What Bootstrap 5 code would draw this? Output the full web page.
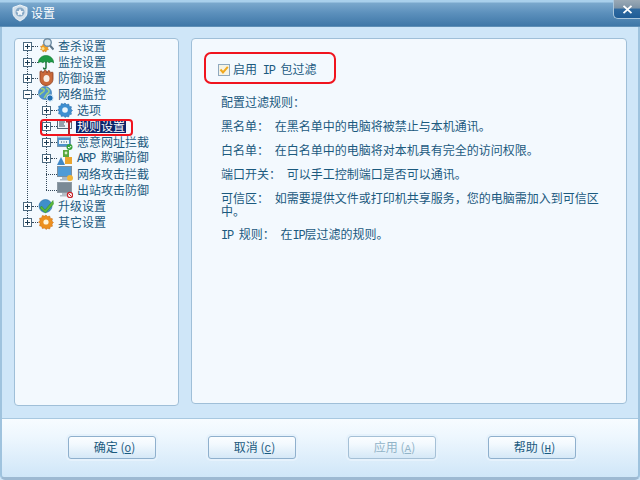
<!DOCTYPE html>
<html lang="zh-CN">
<head>
  <meta charset="UTF-8" />
  <title>设置</title>
  <link href="https://cdn.jsdelivr.net/npm/bootstrap@5.3.3/dist/css/bootstrap.min.css" rel="stylesheet" />
  <style>
    html, body { margin: 0; padding: 0; width: 640px; height: 480px; overflow: hidden; }
    body { font-family: "Noto Sans CJK SC", "Liberation Sans", sans-serif; font-size: 12px; line-height: 16px; color: #1b5a7e; background: #cfe6f8; }
    .asc { font-family: "Liberation Mono", monospace; font-size: 12px; letter-spacing: -1.2px; }

    .win-frame { width: 640px; height: 480px; position: relative; background: #cfe6f8; border-left: 2px solid #9fc3de; border-right: 2px solid #9fc3de; border-bottom: 3px solid #9db9d2; border-radius: 0 0 5px 5px; }
    .win-title { height: 27px; margin: 0 -2px; padding-left: 12px; gap: 3px; color: #fff; font-size: 12px; background: linear-gradient(#a9d0ec 0, #a9d0ec 2px, #7aa8cd 3px, #5c90bc 13px, #3f77a7 26px); border-bottom: 1px solid #5f8fb6; }
    .win-close { position: absolute; top: 0; right: -2px; width: 27px; height: 19px; background: linear-gradient(#9aa9b5 0, #7d93a6 45%, #2f6aa0 50%, #1f5c96 100%); border-left: 1px solid #a9c6dc; border-bottom: 1px solid #a9c6dc; border-radius: 0 0 0 5px; }

    .win-main { padding: 11px 12px 0; gap: 12px; height: 392px; border-bottom: 1px solid #a8c8e0; }
    .pane-tree { width: 165px; height: 368px; flex: none; background: #f3f9fe; border: 1px solid #9fbfd8; border-radius: 4px; }
    .pane-info { width: 436px; height: 366px; flex: none; padding: 13px 12px 0 29px; position: relative; word-spacing: 3px; background: #f3f9fe; border: 1px solid #9fbfd8; border-radius: 4px; }

    .tree-list { list-style: none; margin: -1px 0 0; padding: 0; position: relative; }
    .tree-row { height: 16px; position: relative; white-space: nowrap; word-spacing: 3px; }
    .lvl-one { padding-left: 8px; }
    .lvl-two { padding-left: 27px; }
    .tree-box { width: 9px; height: 9px; flex: none; position: relative; background: #fff; border: 1px solid #4c6a80; z-index: 1; }
    .tree-box::before { content: ""; position: absolute; left: 1px; top: 3px; width: 5px; height: 1px; background: #1d3d55; }
    .tree-box.is-closed::after { content: ""; position: absolute; left: 3px; top: 1px; width: 1px; height: 5px; background: #1d3d55; }
    .tree-dots { width: 6px; flex: none; border-top: 1px dotted #33485a; }
    .tree-dots-long { width: 11px; margin-left: 4px; }
    .tree-ico { width: 16px; height: 16px; flex: none; display: block; margin-right: 4px; }
    .tree-text { font-size: 12px; line-height: 14px; }
    .tree-picked { margin-left: -1px; padding: 0 1px; background: #0a246a; color: #fff; }
    .vline-one { position: absolute; left: 12px; top: 8px; height: 176px; border-left: 1px dotted #33485a; }
    .vline-two { position: absolute; left: 31px; top: 61px; height: 91px; border-left: 1px dotted #33485a; }
    .mark-row { position: absolute; left: 25px; top: 81px; width: 93px; height: 17px; border: 2px solid #f0141e; border-radius: 4px; pointer-events: none; z-index: 2; }

    .mark-check { position: absolute; left: 12px; top: 13px; width: 132px; height: 32px; border: 2px solid #f0141e; border-radius: 7px; }
    .check-line { height: 17px; margin-left: -3px; margin-top: 9px; margin-bottom: 14px; gap: 3px; }
    .check-face { width: 12px; height: 12px; flex: none; display: block; }
    .info-text p { margin: 0 0 8px; line-height: 13px; padding-top: 3px; }
    .info-text p.wrap-two { margin-bottom: 7px; }

    .win-foot { height: 58px; padding: 17px 0 0 66px; gap: 52px; background: linear-gradient(#f7fcff, #eef7fe 30%, #cfe6f8); border-radius: 0 0 5px 5px; }
    .foot-btn { width: 88px; height: 23px; padding: 0 0 0 5px; font-size: 12px; line-height: 20px; color: #1b5a7e; background: linear-gradient(#fbfdff, #f2f9fe 35%, #d5e8f7); border: 1px solid #8fb0cd; border-radius: 3px; box-shadow: 0 0 0 2px #e6f2fc; --bs-btn-disabled-opacity: 1; }
    .foot-btn:disabled { color: #92b4c8; background: linear-gradient(#fbfdff, #f2f9fe 35%, #d5e8f7); border-color: #a5c0d6; }
    .foot-btn u { font-family: "Liberation Mono", monospace; font-size: 11px; }
  </style>
</head>
<body>
  <div class="win-frame">
    <div class="win-title d-flex align-items-center">
      <svg width="16" height="18" viewBox="0 0 16 18"><path d="M8 1 L15 3.500 V8.500 C15 12.500 12 15 8 17 C4 15 1 12.500 1 8.500 V3.500 Z" fill="#d3e0eb" stroke="#eef4f9"/><circle cx="8" cy="8" r="4.500" fill="#86a8c6"/><path d="M8 4.500 l1.200 2.400 2.600.3-1.900 1.800.5 2.600L8 10.400l-2.400 1.200.5-2.600-1.900-1.800 2.600-.3z" fill="#eef4f9"/></svg>
      <span>设置</span>
    </div>
    <div class="win-close d-flex align-items-center justify-content-center">
      <svg width="11" height="9" viewBox="0 0 11 9"><path d="M1.500 .8 L9.500 8.200 M9.500 .8 L1.500 8.200" stroke="#fff" stroke-width="1.800"/></svg>
    </div>

    <div class="win-main d-flex align-items-start">
      <div class="pane-tree">
        <ul class="tree-list">
          <li class="vline-one"></li>
          <li class="vline-two"></li>
          <li class="mark-row"></li>

          <li class="tree-row lvl-one d-flex align-items-center"><span class="tree-box is-closed"></span><span class="tree-dots"></span>
            <svg class="tree-ico" viewBox="0 0 16 16"><path d="M5 6 l1.500 1 1.500-1 .5 2 2 .3-1 1.700 1 1.700-2 .3-.5 2-1.500-1-1.500 1-.5-2-2-.3 1-1.700-1-1.700 2-.3z" fill="#ef9e22" stroke="#c9771a" stroke-width=".5"/><circle cx="5" cy="10.500" r="1.500" fill="#fbe08a"/><circle cx="9.500" cy="4.500" r="3.800" fill="#d7e6ef" stroke="#6f8ea6" stroke-width="1.400"/><path d="M12 7.500 L15.500 11.500" stroke="#5c7487" stroke-width="2"/></svg>
            <span class="tree-text">查杀设置</span></li>
          <li class="tree-row lvl-one d-flex align-items-center"><span class="tree-box is-closed"></span><span class="tree-dots"></span>
            <svg class="tree-ico" viewBox="0 0 16 16"><path d="M0 9 C1 3 5 1.500 8 1.500 C11 1.500 15 3 16 9 C14 7.500 12.500 7.500 11 9 C10 7.500 9 7.500 8 8.500 C7 7.500 6 7.500 5 9 C3.500 7.500 2 7.500 0 9 Z" fill="#1f9a45" stroke="#0f7030" stroke-width=".5"/><path d="M8 8 V13.500 C8 15.500 5.500 15.500 5.500 13.500" fill="none" stroke="#0f6a2e" stroke-width="1.400"/></svg>
            <span class="tree-text">监控设置</span></li>
          <li class="tree-row lvl-one d-flex align-items-center"><span class="tree-box is-closed"></span><span class="tree-dots"></span>
            <svg class="tree-ico" viewBox="0 0 16 16"><path d="M2 2 C2 .5 4 .5 4.500 2 L5 3 L6 1 C6.500 0 8 0 8.500 1 L9 3 L10 1 C10.500 0 12 .5 12 2 L12.500 3 L14 2 C15 2 15 3 15 4 V9 C15 13 11.500 15.500 8 15.500 C4.500 15.500 2 13 2 9 Z" fill="#c9693a" stroke="#8a3d1e" stroke-width=".8"/><ellipse cx="8.500" cy="8.500" rx="3" ry="3.500" fill="#f7efe6"/></svg>
            <span class="tree-text">防御设置</span></li>
          <li class="tree-row lvl-one d-flex align-items-center"><span class="tree-box"></span><span class="tree-dots"></span>
            <svg class="tree-ico" viewBox="0 0 16 16"><circle cx="7" cy="7" r="6.500" fill="#4f94cf" stroke="#2f6ea8" stroke-width=".6"/><path d="M3 3 C5 2 7 3 6 5 C5 7 2 7 2 9 M8 2 C11 3 12 6 10 7 C8 8 8 10 6 12" fill="none" stroke="#9fd27a" stroke-width="1.600"/><circle cx="12" cy="12" r="3.200" fill="#1e6fb5" stroke="#e2f0fa"/></svg>
            <span class="tree-text">网络监控</span></li>

          <li class="tree-row lvl-two d-flex align-items-center"><span class="tree-box is-closed"></span><span class="tree-dots"></span>
            <svg class="tree-ico" viewBox="0 0 16 16"><path d="M8 1 l1.500 1.600 2.200-.6.6 2.200 2.200.6-.6 2.200L15.500 8.500 14 10l.5 2.200-2.200.6-.6 2.200-2.200-.6L8 15.500 6.500 14l-2.200.6-.6-2.200-2.200-.6.6-2.200L.5 8l1.600-1.500-.6-2.200 2.200-.6.6-2.200 2.200.6z" fill="#3f8fd0" stroke="#2a6aa6" stroke-width=".5"/><circle cx="8" cy="8" r="2.800" fill="#eaf5fc"/></svg>
            <span class="tree-text">选项</span></li>
          <li class="tree-row lvl-two d-flex align-items-center"><span class="tree-box is-closed"></span><span class="tree-dots"></span>
            <svg class="tree-ico" viewBox="0 0 16 16"><rect x=".5" y="1.500" width="14" height="9" fill="#eef3f7" stroke="#53677a"/><path d="M2 4 H8 M2 6 H7 M2 8 H8" stroke="#3b4f60"/><path d="M9 3.500 H15 M12 3.500 V16" stroke="#b3202a" stroke-width="2"/></svg>
            <span class="tree-text tree-picked">规则设置</span></li>
          <li class="tree-row lvl-two d-flex align-items-center"><span class="tree-box is-closed"></span><span class="tree-dots"></span>
            <svg class="tree-ico" viewBox="0 0 16 16"><rect x=".5" y=".5" width="13" height="12" fill="#4f93cb" stroke="#6c8aa3" stroke-width=".8"/><rect x=".5" y=".5" width="13" height="3" fill="#c9d9e4"/><rect x="2" y="6" width="10" height="4" fill="#eef6fb"/><path d="M4 8 h1 M6.500 8 h1 M9 8 h1" stroke="#1d3d55"/><circle cx="12.500" cy="13" r="3" fill="#35a33a"/><path d="M11 13 l1.200 1.200 2-2.200" fill="none" stroke="#fff"/></svg>
            <span class="tree-text">恶意网址拦截</span></li>
          <li class="tree-row lvl-two d-flex align-items-center"><span class="tree-box is-closed"></span><span class="tree-dots"></span>
            <svg class="tree-ico" viewBox="0 0 16 16"><rect x="6" y="0" width="6" height="7" fill="#58a83e"/><path d="M4 7 L8 15 H0 Z" fill="#3f88c8"/><rect x="8" y="7" width="7" height="7" fill="#eaa52f"/><circle cx="9" cy="3" r="1.400" fill="#d6eec8"/></svg>
            <span class="tree-text"><span class="asc">ARP</span> 欺骗防御</span></li>
          <li class="tree-row lvl-two d-flex align-items-center"><span class="tree-dots tree-dots-long"></span>
            <svg class="tree-ico" viewBox="0 0 16 16"><rect x=".5" y=".5" width="14" height="10" fill="#4f9bd6" stroke="#7c8f9e"/><path d="M5 11 h5 v2 h-5z M3 13 h9 v1.500 h-9z" fill="#a9b8c4"/><circle cx="13" cy="12" r="3" fill="#f0b53a"/></svg>
            <span class="tree-text">网络攻击拦截</span></li>
          <li class="tree-row lvl-two d-flex align-items-center"><span class="tree-dots tree-dots-long"></span>
            <svg class="tree-ico" viewBox="0 0 16 16"><rect x=".5" y=".5" width="14" height="10" fill="#7a8a96" stroke="#8e9aa4"/><path d="M5 11 h5 v2 h-5z M3 13 h9 v1.500 h-9z" fill="#b5bfc7"/><circle cx="13" cy="13" r="2.600" fill="#fff" stroke="#c8252c" stroke-width="1.200"/><path d="M11.500 11.500 L14.500 14.500" stroke="#c8252c"/></svg>
            <span class="tree-text">出站攻击防御</span></li>

          <li class="tree-row lvl-one d-flex align-items-center"><span class="tree-box is-closed"></span><span class="tree-dots"></span>
            <svg class="tree-ico" viewBox="0 0 16 16"><circle cx="7.500" cy="8" r="6.500" fill="#3f8fcb" stroke="#27699f" stroke-width=".6"/><path d="M3.500 8 L7 12 L15 2.500 L15.500 6 L7.500 15 L2 10 Z" fill="#5cb83c" stroke="#2f8a24" stroke-width=".5"/></svg>
            <span class="tree-text">升级设置</span></li>
          <li class="tree-row lvl-one d-flex align-items-center"><span class="tree-box is-closed"></span><span class="tree-dots"></span>
            <svg class="tree-ico" viewBox="0 0 16 16"><path d="M8 1 l1.500 1.600 2.200-.6.6 2.200 2.200.6-.6 2.200L15.500 8.500 14 10l.5 2.200-2.200.6-.6 2.200-2.200-.6L8 15.500 6.500 14l-2.200.6-.6-2.200-2.200-.6.6-2.200L.5 8l1.600-1.500-.6-2.200 2.200-.6.6-2.200 2.200.6z" fill="#ec8f1e" stroke="#c76a14" stroke-width=".5"/><circle cx="8" cy="8" r="2.600" fill="#fff4d8"/></svg>
            <span class="tree-text">其它设置</span></li>
        </ul>
      </div>

      <div class="pane-info">
        <div class="mark-check"></div>
        <label class="check-line d-flex align-items-center">
          <svg class="check-face" viewBox="0 0 12 12"><rect x=".5" y=".5" width="11" height="11" fill="#f6f3e4" stroke="#8fa9bf"/><path d="M2.500 5.500 L5 8.500 L9.800 2.800" fill="none" stroke="#f0a81e" stroke-width="2"/></svg>
          <span>启用 <span class="asc">IP</span> 包过滤</span>
        </label>
        <div class="info-text">
          <p>配置过滤规则：</p>
          <p>黑名单： 在黑名单中的电脑将被禁止与本机通讯。</p>
          <p>白名单： 在白名单中的电脑将对本机具有完全的访问权限。</p>
          <p>端口开关： 可以手工控制端口是否可以通讯。</p>
          <p class="wrap-two">可信区： 如需要提供文件或打印机共享服务，您的电脑需加入到可信区<br>中。</p>
          <p><span class="asc">IP</span> 规则： 在<span class="asc">IP</span>层过滤的规则。</p>
        </div>
      </div>
    </div>

    <div class="win-foot d-flex align-items-start">
      <button type="button" class="btn foot-btn">确定 (<u>O</u>)</button>
      <button type="button" class="btn foot-btn">取消 (<u>C</u>)</button>
      <button type="button" class="btn foot-btn" disabled>应用 (<u>A</u>)</button>
      <button type="button" class="btn foot-btn">帮助 (<u>H</u>)</button>
    </div>
  </div>
  <script src="https://cdn.jsdelivr.net/npm/bootstrap@5.3.3/dist/js/bootstrap.bundle.min.js"></script>
</body>
</html>
